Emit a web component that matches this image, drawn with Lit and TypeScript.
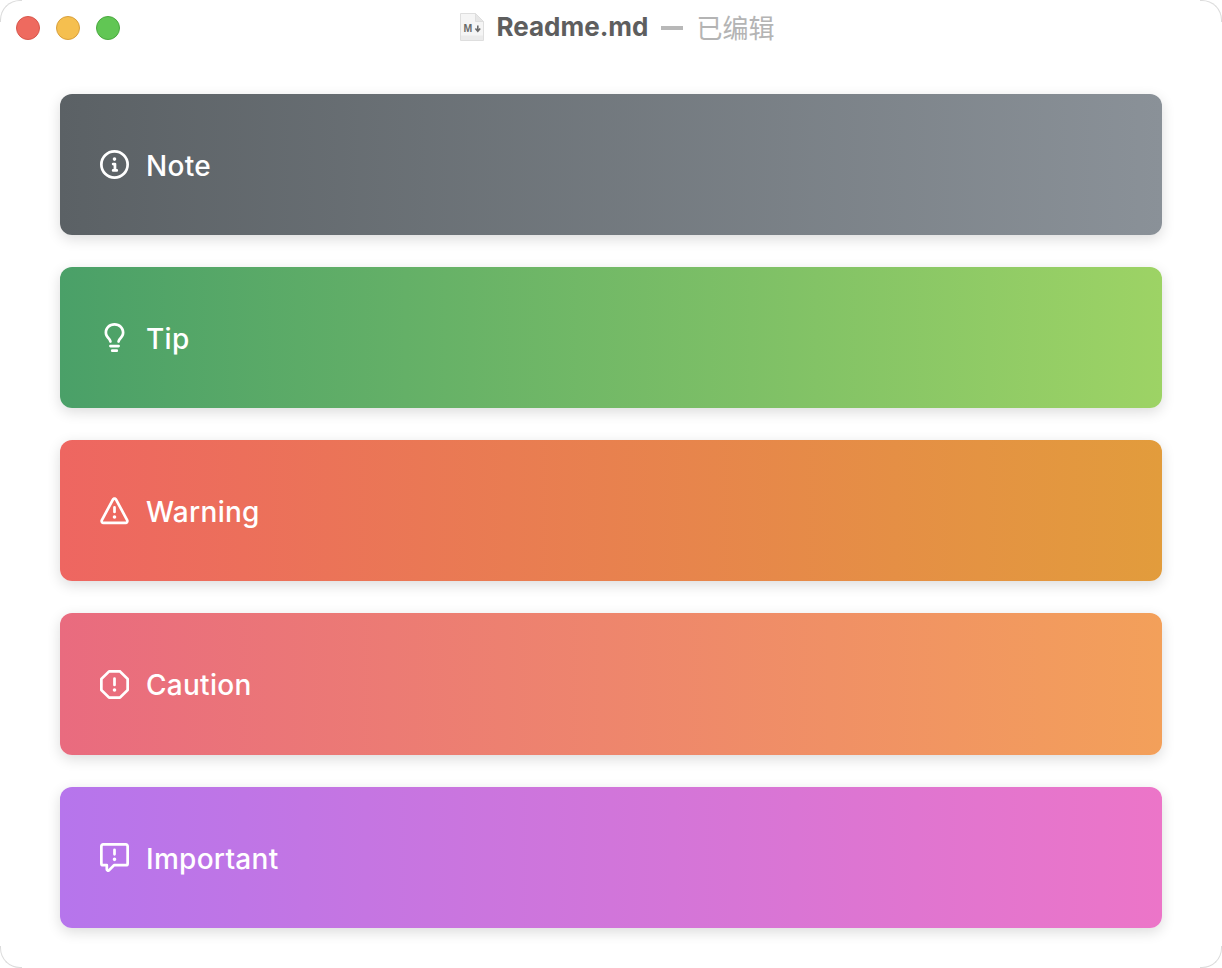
import { LitElement, html, css, svg } from "lit";
import { customElement } from "lit/decorators.js";

const ICONS = {
  note: "M0 8a8 8 0 1 1 16 0A8 8 0 0 1 0 8Zm8-6.5a6.5 6.5 0 1 0 0 13 6.5 6.5 0 0 0 0-13ZM6.5 7.75A.75.75 0 0 1 7.25 7h1a.75.75 0 0 1 .75.75v2.75h.25a.75.75 0 0 1 0 1.5h-2a.75.75 0 0 1 0-1.5h.25v-2h-.25a.75.75 0 0 1-.75-.75ZM8 6a1 1 0 1 1 0-2 1 1 0 0 1 0 2Z",
  tip: "M8 1.5c-2.363 0-4 1.69-4 3.75 0 .984.424 1.625.984 2.304l.214.253c.223.264.47.556.673.848.284.411.537.896.621 1.49a.75.75 0 0 1-1.484.211c-.04-.282-.163-.547-.37-.847a8.456 8.456 0 0 0-.542-.68c-.084-.1-.173-.205-.268-.32C3.201 7.75 2.5 6.766 2.5 5.25 2.5 2.31 4.863 0 8 0s5.5 2.31 5.5 5.25c0 1.516-.701 2.5-1.328 3.259-.095.115-.184.22-.268.319-.207.245-.383.453-.541.681-.208.3-.33.565-.37.847a.751.751 0 0 1-1.485-.212c.084-.593.337-1.078.621-1.489.203-.292.45-.584.673-.848.075-.088.147-.173.213-.253.561-.679.985-1.32.985-2.304 0-2.06-1.637-3.75-4-3.75ZM5.75 12h4.5a.75.75 0 0 1 0 1.5h-4.5a.75.75 0 0 1 0-1.5ZM6 15.25a.75.75 0 0 1 .75-.75h2.5a.75.75 0 0 1 0 1.5h-2.5a.75.75 0 0 1-.75-.75Z",
  warning: "M6.457 1.047c.659-1.234 2.427-1.234 3.086 0l6.082 11.378A1.75 1.75 0 0 1 14.082 15H1.918a1.75 1.75 0 0 1-1.543-2.575Zm1.763.707a.25.25 0 0 0-.44 0L1.698 13.132a.25.25 0 0 0 .22.368h12.164a.25.25 0 0 0 .22-.368Zm.53 3.996v2.5a.75.75 0 0 1-1.5 0v-2.5a.75.75 0 0 1 1.5 0ZM9 11a1 1 0 1 1-2 0 1 1 0 0 1 2 0Z",
  caution: "M4.47.22A.749.749 0 0 1 5 0h6c.199 0 .389.079.53.22l4.25 4.25c.141.14.22.331.22.53v6a.749.749 0 0 1-.22.53l-4.25 4.25A.749.749 0 0 1 11 16H5a.749.749 0 0 1-.53-.22L.22 11.53A.749.749 0 0 1 0 11V5c0-.199.079-.389.22-.53Zm.84 1.28L1.5 5.31v5.38l3.81 3.81h5.38l3.81-3.81V5.31L10.69 1.5ZM8 4a.75.75 0 0 1 .75.75v3.5a.75.75 0 0 1-1.5 0v-3.5A.75.75 0 0 1 8 4Zm0 8a1 1 0 1 1 0-2 1 1 0 0 1 0 2Z",
  important: "M0 1.75C0 .784.784 0 1.75 0h12.5C15.216 0 16 .784 16 1.75v9.5A1.75 1.75 0 0 1 14.25 13H8.06l-2.573 2.573A1.458 1.458 0 0 1 3 14.543V13H1.75A1.75 1.75 0 0 1 0 11.25Zm1.75-.25a.25.25 0 0 0-.25.25v9.5c0 .138.112.25.25.25h2a.75.75 0 0 1 .75.75v2.19l2.72-2.72a.749.749 0 0 1 .53-.22h6.5a.25.25 0 0 0 .25-.25v-9.5a.25.25 0 0 0-.25-.25Zm7 2.25v2.5a.75.75 0 0 1-1.5 0v-2.5a.75.75 0 0 1 1.5 0ZM9 9a1 1 0 1 1-2 0 1 1 0 0 1 2 0Z",
};

const CARDS: { key: keyof typeof ICONS; label: string }[] = [
  { key: "note", label: "Note" },
  { key: "tip", label: "Tip" },
  { key: "warning", label: "Warning" },
  { key: "caution", label: "Caution" },
  { key: "important", label: "Important" },
];

@customElement("app-root")
export class AppRoot extends LitElement {
  static styles = css`
    :host {
      display: block;
      width: 1222px;
      height: 968px;
      background: #fff;
      font-family: Inter, "Noto Sans CJK SC", sans-serif;
    }
    .window {
      position: relative;
      box-sizing: border-box;
      height: 968px;
      background: #fff;
      overflow: hidden;
    }
    .corner {
      position: absolute;
      box-sizing: border-box;
      width: 22px;
      height: 22px;
      border: 0 solid #dcdcdc;
    }
    .tl { top: 0; left: 0; border-top-width: 1px; border-left-width: 1px; border-top-left-radius: 20px; }
    .tr { top: 0; right: 0; border-top-width: 1px; border-right-width: 1px; border-top-right-radius: 20px; }
    .bl { bottom: 0; left: 0; border-bottom-width: 1px; border-left-width: 1px; border-bottom-left-radius: 20px; }
    .br { bottom: 0; right: 0; border-bottom-width: 1px; border-right-width: 1px; border-bottom-right-radius: 20px; }
    .titlebar {
      display: grid;
      grid-template-columns: 1fr auto 1fr;
      align-items: center;
      height: 56px;
      padding: 0 16px;
    }
    .lights {
      display: flex;
      gap: 16px;
    }
    .light {
      box-sizing: border-box;
      width: 24px;
      height: 24px;
      border-radius: 50%;
      border: 1px solid;
    }
    .red { background: #ee6a5f; border-color: #d8574c; }
    .yellow { background: #f5bf4f; border-color: #d9a03c; }
    .green { background: #61c654; border-color: #4aa93f; }
    .title {
      display: flex;
      align-items: center;
      margin-left: 12px;
      padding-bottom: 3px;
      white-space: nowrap;
    }
    .file { width: 26px; height: 30px; margin-right: 11px; }
    .file text {
      font: 700 10.5px "Liberation Sans", sans-serif;
      fill: #6a6a6a;
    }
    .name { font-size: 26px; font-weight: 700; color: #5e5e5e; }
    .dash {
      width: 22px;
      height: 4px;
      background: #b8b8b8;
      margin: 3px 14px 0 12px;
    }
    .state { font-size: 26px; font-weight: 400; color: #b4b4b4; font-family: "Noto Sans CJK SC", sans-serif; }
    .cards {
      display: flex;
      flex-direction: column;
      gap: 32px;
      padding: 37.5px 60px 0;
    }
    .card {
      display: flex;
      align-items: center;
      gap: 17px;
      box-sizing: border-box;
      height: 141.25px;
      padding: 1px 40px 0;
      border-radius: 12px;
      color: #fff;
      box-shadow: 0 4px 14px rgba(0, 0, 0, 0.14);
    }
    .note { background: linear-gradient(90deg, #5b6165, #8a9198); }
    .tip { background: linear-gradient(90deg, #4aa068, #9dd365); }
    .warning { background: linear-gradient(90deg, #ee6661, #e29c3c); }
    .caution { background: linear-gradient(90deg, #e96b7f, #f3a05a); }
    .important { background: linear-gradient(90deg, #b675ec, #ec75c8); }
    .card svg { width: 29px; height: 29px; fill: #fff; flex: none; }
    .label {
      font-size: 28px;
      font-weight: 500;
      line-height: 34px;
      letter-spacing: 0.28px;
      padding-top: 2px;
    }
  `;

  render() {
    return html`
      <div class="window">
        <div class="titlebar">
          <div class="lights">
            <span class="light red"></span>
            <span class="light yellow"></span>
            <span class="light green"></span>
          </div>
          <div class="title">
            <svg class="file" viewBox="0 0 26 30">
              <path d="M1.5 1.5h15l8 8V28.5H1.5Z" fill="#f5f5f5" stroke="#dedede" />
              <path d="M16.5 1.5v8h8Z" fill="#e6e6e6" stroke="#dedede" />
              <path d="M2 23.5h22v4.5H2Z" fill="#ebebeb" />
              <text x="4.5" y="20">M</text>
              <path d="M18.8 13.5v5.2M16.4 16.4l2.4 2.8 2.4-2.8" fill="none" stroke="#6a6a6a" stroke-width="1.6" />
            </svg>
            <span class="name">Readme.md</span>
            <span class="dash"></span>
            <span class="state">已编辑</span>
          </div>
          <div></div>
        </div>
        <div class="cards">
          ${CARDS.map(
            (c) => html`
              <div class="card ${c.key}">
                <svg viewBox="0 0 16 16">${svg`<path d=${ICONS[c.key]} />`}</svg>
                <span class="label">${c.label}</span>
              </div>
            `
          )}
        </div>
        <span class="corner tl"></span>
        <span class="corner tr"></span>
        <span class="corner bl"></span>
        <span class="corner br"></span>
      </div>
    `;
  }
}
